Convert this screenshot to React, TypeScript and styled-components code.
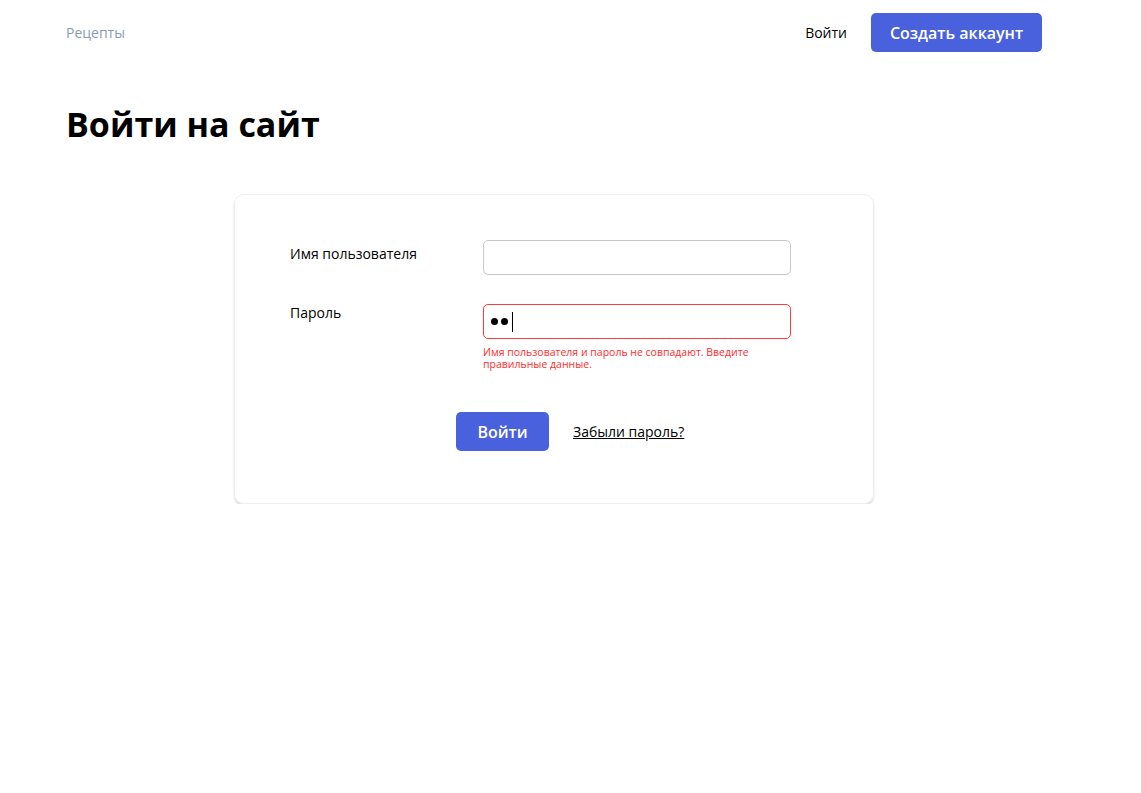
import React from "react";
import styled, { createGlobalStyle } from "styled-components";

const Global = createGlobalStyle`
  html, body { margin: 0; padding: 0; background: #fff; }
  body { font-family: "Open Sans", "Noto Sans", sans-serif; color: #000; }
  * { box-sizing: border-box; }
`;

const Page = styled.div`
  padding: 0 99px 0 66px;
`;

const Header = styled.header`
  height: 65px;
  display: flex;
  align-items: center;
  justify-content: space-between;
`;

const Brand = styled.a`
  font-size: 14px;
  color: #8a9bb9;
  text-decoration: none;
`;

const Nav = styled.nav`
  display: flex;
  align-items: center;
  gap: 24px;
`;

const NavLink = styled.a`
  font-size: 14px;
  color: #000;
  text-decoration: none;
`;

const PrimaryButton = styled.button<{ $w: number }>`
  width: ${(p) => p.$w}px;
  height: 39px;
  border: none;
  border-radius: 5px;
  background: #4a61dd;
  color: #fff;
  font-family: inherit;
  font-size: 16px;
  font-weight: 600;
  cursor: pointer;
`;

const Title = styled.h1`
  margin: 35px 0 0;
  font-size: 34px;
  font-weight: 700;
  line-height: 48px;
`;

const Card = styled.form`
  margin: 46px 0 0 168px;
  width: 640px;
  height: 310px;
  border: 1px solid #eeeeee;
  border-radius: 10px;
  box-shadow: 0 2px 2px rgba(0, 0, 0, 0.15);
  padding: 45px 0 0 55px;
`;

const Row = styled.div<{ $gap: number }>`
  display: grid;
  grid-template-columns: 193px 308px;
  margin-bottom: ${(p) => p.$gap}px;
`;

const Label = styled.label<{ $top: number }>`
  font-size: 14px;
  line-height: 16px;
  padding-top: ${(p) => p.$top}px;
`;

const Field = styled.div`
  display: flex;
  flex-direction: column;
`;

const Input = styled.div<{ $error?: boolean }>`
  height: 35px;
  border: 1px solid ${(p) => (p.$error ? "#ff3b3b" : "#c9c9c9")};
  border-radius: 5px;
  display: flex;
  align-items: center;
  padding-left: 7px;
  gap: 3px;
`;

const Dot = styled.span`
  width: 7px;
  height: 7px;
  border-radius: 50%;
  background: #000;
`;

const Caret = styled.span`
  width: 1px;
  height: 20px;
  background: #000;
  margin-left: 1px;
`;

const ErrorText = styled.div`
  margin-top: 7px;
  font-size: 10.5px;
  line-height: 12px;
  color: #ff2d2d;
`;

const Actions = styled.div`
  display: flex;
  align-items: center;
  gap: 24px;
  margin-left: 166px;
  margin-top: 42px;
`;

const ForgotLink = styled.a`
  font-size: 14px;
  color: #000;
  text-decoration: underline;
`;

export default function App() {
  return (
    <>
      <Global />
      <Page>
        <Header>
          <Brand href="#">Рецепты</Brand>
          <Nav>
            <NavLink href="#">Войти</NavLink>
            <PrimaryButton $w={171}>Создать аккаунт</PrimaryButton>
          </Nav>
        </Header>
        <Title>Войти на сайт</Title>
        <Card>
          <Row $gap={29}>
            <Label $top={6}>Имя пользователя</Label>
            <Field>
              <Input />
            </Field>
          </Row>
          <Row $gap={0}>
            <Label $top={1}>Пароль</Label>
            <Field>
              <Input $error>
                <Dot />
                <Dot />
                <Caret />
              </Input>
              <ErrorText>
                Имя пользователя и пароль не совпадают. Введите правильные данные.
              </ErrorText>
            </Field>
          </Row>
          <Actions>
            <PrimaryButton $w={93} type="button">Войти</PrimaryButton>
            <ForgotLink href="#">Забыли пароль?</ForgotLink>
          </Actions>
        </Card>
      </Page>
    </>
  );
}
